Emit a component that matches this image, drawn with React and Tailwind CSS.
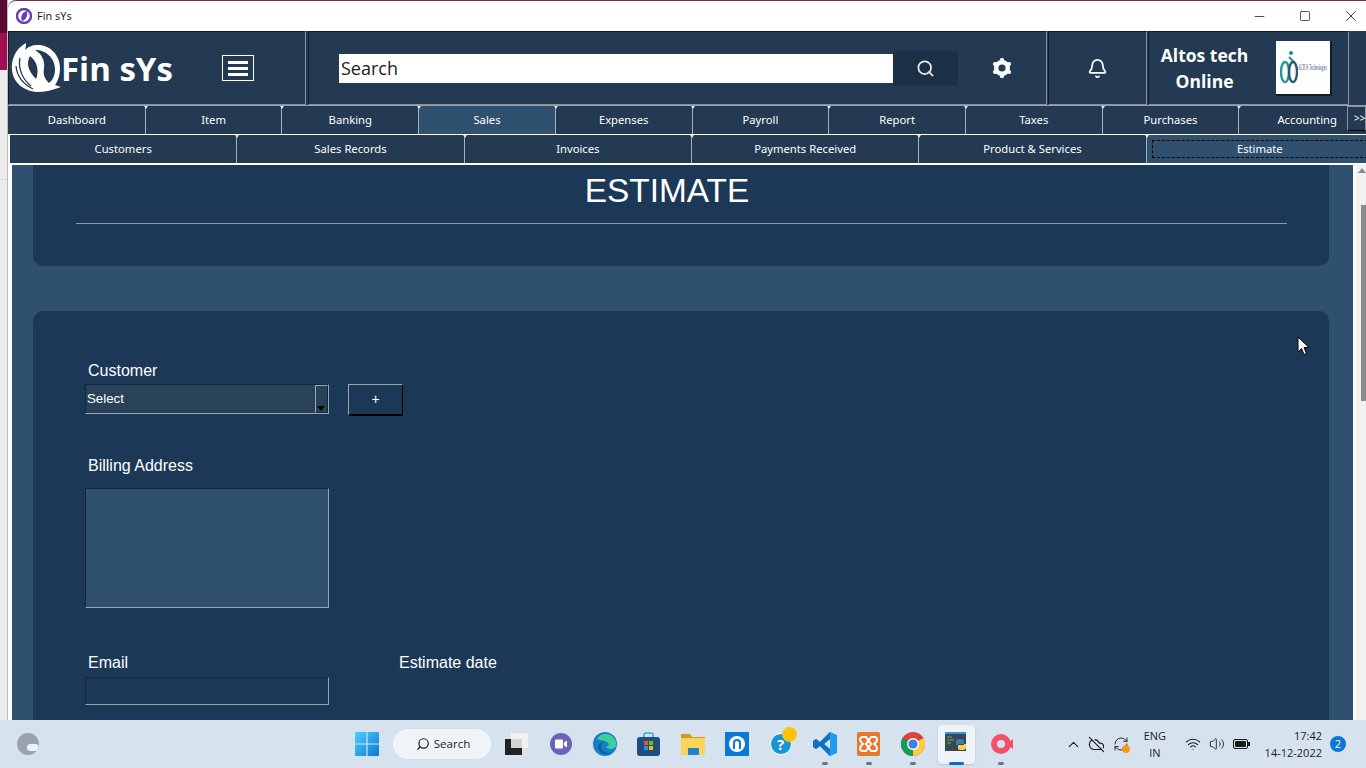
import { Bell, Search, Minus, Square, X, ChevronUp, Wifi, Volume2, CloudOff, RefreshCw } from "lucide-react";

const mainTabs = ["Dashboard", "Item", "Banking", "Sales", "Expenses", "Payroll", "Report", "Taxes", "Purchases", "Accounting"];
const subTabs = ["Customers", "Sales Records", "Invoices", "Payments Received", "Product & Services", "Estimate"];

function AppLogo() {
  return (
    <svg width="50" height="52" viewBox="0 0 50 52" className="shrink-0">
      <path d="M15 1 C4 7 0 18 1 28 C2 40 12 49 26 50 C34 50 42 48 50 45 L44 43 C47 39 49 33 49 26 C49 13 39 3 27 3 C21 3 17 5 14 8 C15 5 15 3 15 1 Z" fill="#fff" />
      <path d="M24 8 C35 8 44 16 44 27 C44 33 42 38 38 41 C33 36 32 32 33 26 C34 19 31 12 24 8 Z" fill="#233a52" />
      <path d="M19 14 C15 21 17 29 25 37 C28 30 27 20 19 14 Z" fill="#233a52" />
      <path d="M9 16 C7 26 11 37 20 44 M5 24 C6 34 12 42 22 47" stroke="#233a52" strokeWidth="1.3" fill="none" />
    </svg>
  );
}

function CompanyLogo() {
  return (
    <div className="flex h-[55px] w-[56px] items-center border-r-2 border-b-2 border-[#111c28] bg-white pl-[4px]">
      <svg width="18" height="36" viewBox="0 0 18 36" className="shrink-0">
        <circle cx="11" cy="4" r="2" fill="#1f8f8f" />
        <path d="M9 8 L14 13" stroke="#1f8f8f" strokeWidth="2" />
        <ellipse cx="5" cy="23" rx="4" ry="10" fill="none" stroke="#1f9a96" strokeWidth="2.4" />
        <ellipse cx="13" cy="23" rx="4" ry="10" fill="none" stroke="#2b5a78" strokeWidth="2.4" />
      </svg>
      <div className="w-[30px] overflow-visible">
        <span className="block origin-left scale-x-[0.37] whitespace-nowrap font-['Liberation_Serif',serif] text-[9px] leading-none text-[#34506c]">ALTOS Technologies</span>
      </div>
    </div>
  );
}

function GearIcon() {
  return (
    <svg width="20" height="20" viewBox="0 0 20 20" className="ml-[34px]">
      <circle cx="10" cy="10" r="8" fill="#fff" />
      <circle cx="10" cy="1.8" r="2" fill="#fff" />
      <circle cx="10" cy="18.2" r="2" fill="#fff" />
      <circle cx="2.9" cy="5.9" r="2" fill="#fff" />
      <circle cx="17.1" cy="5.9" r="2" fill="#fff" />
      <circle cx="2.9" cy="14.1" r="2" fill="#fff" />
      <circle cx="17.1" cy="14.1" r="2" fill="#fff" />
      <circle cx="10" cy="10" r="3.6" fill="#233a52" />
    </svg>
  );
}

function WinLogo() {
  return (
    <svg width="24" height="24" viewBox="0 0 24 24">
      <defs>
        <linearGradient id="wl" x1="0" y1="0" x2="1" y2="1">
          <stop offset="0" stopColor="#4fd0fb" />
          <stop offset="1" stopColor="#0a78d4" />
        </linearGradient>
      </defs>
      <path d="M0 1 a1 1 0 0 1 1-1 h10.4 v11.4 H0 Z M12.6 0 H23 a1 1 0 0 1 1 1 v10.4 H12.6 Z M0 12.6 h11.4 V24 H1 a1 1 0 0 1-1-1 Z M12.6 12.6 H24 V23 a1 1 0 0 1-1 1 H12.6 Z" fill="url(#wl)" />
    </svg>
  );
}

function TaskIcon({ children, dot, active }) {
  return (
    <div className={`relative flex h-[39px] w-[37px] shrink-0 items-center justify-center rounded ${active ? "bg-[#eef3f9] shadow-sm" : ""}`}>
      {children}
      {dot && <span className="absolute -bottom-[1px] h-[3px] w-[6px] rounded-full bg-[#6c7680]" />}
      {active && <span className="absolute -bottom-[1px] h-[3px] w-[15px] rounded-full bg-[#0f6cc4]" />}
    </div>
  );
}

function Taskbar() {
  return (
    <div className="flex h-[48px] shrink-0 items-center bg-[#d6e2ee] font-['Open_Sans',sans-serif] text-[#1c1c1c]">
      <div className="relative ml-[17px] h-[22px] w-[22px] overflow-hidden rounded-full bg-[#98a2ad]">
        <span className="absolute bottom-[4px] right-0 h-[7px] w-[12px] rounded-full bg-[#eef1f4]" />
      </div>
      <div className="ml-[316px]"><WinLogo /></div>
      <div className="ml-[14px] flex h-[30px] w-[98px] items-center justify-center gap-1 rounded-full bg-[#eff4f9] pl-[2px] text-[11.5px]">
        <Search size={14} className="-scale-x-100" />
        Search
      </div>
      <div className="ml-[7px] flex items-center gap-[7px]">
        <TaskIcon>
          <div className="relative h-[22px] w-[23px]">
            <span className="absolute bottom-0 left-0 h-[16px] w-[17px] bg-[#222]" />
            <span className="absolute right-0 top-0 h-[15px] w-[17px] bg-[#f4f4f4]/85" />
          </div>
        </TaskIcon>
        <TaskIcon>
          <div className="flex h-[22px] w-[22px] items-center justify-center rounded-full bg-[#6a63b8]">
            <svg width="12" height="10" viewBox="0 0 12 10"><path d="M0 1.5 a1 1 0 0 1 1-1 h6 a1 1 0 0 1 1 1 v7 a1 1 0 0 1-1 1 h-6 a1 1 0 0 1-1-1 Z M9 3.5 L12 1.5 v7 L9 6.5 Z" fill="#fff" /></svg>
          </div>
        </TaskIcon>
        <TaskIcon>
          <svg width="24" height="24" viewBox="0 0 24 24">
            <circle cx="12" cy="12" r="12" fill="#1580c8" />
            <path d="M4 7 C8 0 20 0 23 10 C24 14 22 17 18 17 C15 17 13 16 13 14 C15 15 17 13 15 11 C11 7 6 9 4 7 Z" fill="#3ecf9a" />
            <path d="M8 14 C8 19 13 22 19 20 C15 24 6 23 5 15 C5 12 8 10 11 10 C9 11 8 12 8 14 Z" fill="#0f5f9e" />
          </svg>
        </TaskIcon>
        <TaskIcon>
          <svg width="23" height="24" viewBox="0 0 23 24">
            <path d="M7 6 V3 a2 2 0 0 1 2-2 h5 a2 2 0 0 1 2 2 v3" stroke="#35a7d8" strokeWidth="1.5" fill="none" />
            <rect x="0" y="5" width="23" height="19" rx="3" fill="#1d4e80" />
            <rect x="7" y="9" width="4" height="4" fill="#f25022" />
            <rect x="12" y="9" width="4" height="4" fill="#7fba00" />
            <rect x="7" y="14" width="4" height="4" fill="#00a4ef" />
            <rect x="12" y="14" width="4" height="4" fill="#ffb900" />
          </svg>
        </TaskIcon>
        <TaskIcon>
          <svg width="24" height="22" viewBox="0 0 24 22">
            <path d="M0 1 h9 l2 3 h13 v4 H0 Z" fill="#d29c16" />
            <rect x="0" y="5" width="24" height="17" fill="#fbd45c" />
            <rect x="7" y="15" width="11" height="7" rx="1" fill="#1a86c9" />
          </svg>
        </TaskIcon>
        <TaskIcon>
          <div className="flex h-[24px] w-[24px] items-center justify-center bg-[#0a78d4]">
            <div className="flex h-[16px] w-[16px] items-center justify-center rounded-full bg-white">
              <div className="h-[10px] w-[8px] rounded-t-full border-2 border-b-0 border-[#0a78d4]" />
            </div>
          </div>
        </TaskIcon>
        <TaskIcon>
          <div className="relative flex h-[22px] w-[22px] items-center justify-center rounded-full border border-white bg-[#1595d3] text-[15px] font-bold text-white">
            ?
            <span className="absolute -right-[6px] -top-[7px] h-[15px] w-[15px] rounded-full bg-[#fdc20c]" />
          </div>
        </TaskIcon>
        <TaskIcon dot>
          <svg width="24" height="24" viewBox="0 0 24 24">
            <path d="M17 0 L24 3 V21 L17 24 L7 14 L3 17 L0 15 V9 L3 7 L7 10 Z M17 7 L11 12 L17 17 Z" fill="#1f9cf0" fillRule="evenodd" />
            <path d="M17 0 L7 10 L3 7 L0 9 V15 L3 17 L7 14 L17 24 V17 L11 12 L17 7 Z" fill="#0f74bd" />
          </svg>
        </TaskIcon>
        <TaskIcon dot>
          <svg width="23" height="24" viewBox="0 0 23 24">
            <rect width="23" height="24" rx="2" fill="#e8782c" />
            <path d="M4 5 H9 L14 12 L9 19 H4 M19 5 H14 L9 12 L14 19 H19 M4 5 C2 8 3 10 6 12 C3 14 2 16 4 19 M19 5 C21 8 20 10 17 12 C20 14 21 16 19 19" stroke="#fff" strokeWidth="2" fill="none" />
          </svg>
        </TaskIcon>
        <TaskIcon dot>
          <svg width="24" height="24" viewBox="0 0 24 24">
            <circle cx="12" cy="12" r="12" fill="#db4437" />
            <path d="M12 12 L1.6 6 A12 12 0 0 0 12 24 Z" fill="#0f9d58" />
            <path d="M12 12 L22.4 6 A12 12 0 0 1 12 24 Z" fill="#ffcd40" />
            <circle cx="12" cy="12" r="6" fill="#fff" />
            <circle cx="12" cy="12" r="4.6" fill="#3f7fea" />
          </svg>
        </TaskIcon>
        <TaskIcon active>
          <svg width="24" height="24" viewBox="0 0 24 24">
            <rect x="0" y="1" width="21" height="18" fill="#3a4650" />
            <rect x="0" y="0" width="21" height="2" fill="#2b9bd6" />
            <path d="M2 5 h5 M2 8 h7 M2 11 h4" stroke="#5bb36a" strokeWidth="1" />
            <path d="M11 10 a3 3 0 0 1 3-3 h3 a2 2 0 0 1 2 2 v3 h-6 v1 h-2 Z" fill="#3a7ab0" />
            <path d="M21 15 a3 3 0 0 1-3 3 h-3 a2 2 0 0 1-2-2 v-3 h6 v-1 h2 Z" fill="#f7d24b" />
          </svg>
        </TaskIcon>
        <TaskIcon dot>
          <div className="relative h-[20px] w-[20px] rounded-full bg-[#f3506a]">
            <span className="absolute left-[6px] top-[6px] h-[8px] w-[8px] rounded-full bg-[#d6e2ee]" />
            <span className="absolute -right-[2px] top-[5px] h-0 w-0 border-y-[5px] border-r-[6px] border-y-transparent border-r-[#f3506a]" />
          </div>
        </TaskIcon>
      </div>
      <div className="ml-auto flex items-center">
        <ChevronUp size={17} strokeWidth={1.5} />
        <CloudOff size={17} strokeWidth={1.6} className="ml-[6px]" />
        <div className="relative ml-[8px]">
          <RefreshCw size={16} strokeWidth={1.4} />
          <span className="absolute -bottom-[1px] -right-[1px] h-[8px] w-[8px] rounded-full bg-[#f79a14]" />
        </div>
        <div className="ml-[15px] flex flex-col items-center text-[11px] leading-[17px]">
          <span>ENG</span>
          <span>IN</span>
        </div>
        <Wifi size={16} strokeWidth={1.6} className="ml-[19px]" />
        <Volume2 size={16} strokeWidth={1.3} className="ml-[8px]" />
        <div className="ml-[8px] flex items-center">
          <span className="flex h-[10px] w-[15px] items-center rounded-[2px] border border-[#1c1c1c] p-px">
            <span className="h-full w-full rounded-[1px] bg-[#1c1c1c]" />
          </span>
          <span className="h-[4px] w-[1.5px] bg-[#1c1c1c]" />
        </div>
        <div className="ml-[15px] flex flex-col items-end text-[11px] leading-[17px]">
          <span>17:42</span>
          <span>14-12-2022</span>
        </div>
        <div className="ml-[8px] mr-[20px] flex h-[16px] w-[16px] items-center justify-center rounded-full bg-[#0a78d4] text-[11px] text-white">2</div>
      </div>
    </div>
  );
}

function Header() {
  return (
    <div className="flex h-[74px] shrink-0 bg-[#233a52] text-white">
      <div className="flex w-[298px] items-center border border-[#111c28] border-r-[#8b939b] border-b-[#8b939b] pl-[2px]">
        <AppLogo />
        <span className="w-[110px] whitespace-nowrap font-['Open_Sans',sans-serif] text-[33px] font-bold leading-none">Fin sYs</span>
        <button className="ml-[51px] flex h-[26px] w-[32px] flex-col items-center justify-center gap-[3px] border border-white">
          <span className="h-[3px] w-[20px] bg-white" />
          <span className="h-[3px] w-[20px] bg-white" />
          <span className="h-[3px] w-[20px] bg-white" />
        </button>
      </div>
      <div className="ml-[2px] flex w-[739px] items-center border border-[#111c28] border-r-[#8b939b] border-b-[#8b939b] pl-[30px]">
        <div className="flex h-[29px] w-[554px] items-center bg-white pl-[2px] font-['Open_Sans',sans-serif] text-[18px] text-[#222]">Search</div>
        <div className="flex h-[35px] w-[65px] items-center justify-center bg-[#1c3045]">
          <Search size={19} strokeWidth={2.2} className="text-[#e8e8e8]" />
        </div>
        <GearIcon />
      </div>
      <div className="ml-[1px] flex w-[99px] items-center justify-center border border-[#111c28] border-r-[#8b939b] border-b-[#8b939b]">
        <Bell size={21} strokeWidth={2} />
      </div>
      <div className="ml-[1px] flex w-[201px] items-center border border-[#111c28] border-r-[#8b939b] border-b-[#8b939b] pl-[11px]">
        <div className="w-[89px] whitespace-nowrap text-center font-['Open_Sans',sans-serif] text-[17.5px] font-bold leading-[26px]">
          <div>Altos tech</div>
          <div>Online</div>
        </div>
        <div className="ml-[27px]"><CompanyLogo /></div>
      </div>
      <div className="flex-1" />
    </div>
  );
}

function TabCell({ label, active, focused, first }) {
  return (
    <div className={`relative flex h-full flex-1 items-center justify-center ${active ? "bg-[#305070]" : "bg-[#233a52]"} ${first ? "" : "border-l border-[#a9b2ba]"}`}>
      {!first && <span className="absolute -left-[2px] top-0 h-0 w-0 border-x-[2px] border-t-[3px] border-x-transparent border-t-[#dfe3e6]" />}
      {focused && <span className="absolute inset-x-[5px] inset-y-[5px] border border-dashed border-black" />}
      <span className="relative">{label}</span>
    </div>
  );
}

function TabBars() {
  return (
    <div className="shrink-0 overflow-hidden font-['Noto_Sans',sans-serif] text-[11.25px] text-white">
      <div className="relative h-[29px] border-t border-[#9aa1a8] bg-[#233a52]">
        <div className="flex h-full w-[1367px] pl-[1px]">
          {mainTabs.map((t, i) => (
            <TabCell key={t} label={t} active={t === "Sales"} first={i === 0} />
          ))}
        </div>
        <div className="absolute left-[1339px] right-0 top-0 flex h-[25px] items-center whitespace-nowrap border border-[#8b939b] border-b-black bg-[#233a52] pl-[6px] text-[10px]">&gt;&gt;</div>
      </div>
      <div className="h-[31px] border-t border-white bg-white">
        <div className="flex h-[28px] w-[1365px] pl-[2px]">
          {subTabs.map((t, i) => (
            <TabCell key={t} label={t} focused={t === "Estimate"} active={t === "Estimate"} first={i === 0} />
          ))}
        </div>
      </div>
    </div>
  );
}

function FieldLabel({ children, className = "" }) {
  return <div className={`pl-[3px] text-[16px] leading-[18px] text-white ${className}`}>{children}</div>;
}

function Scrollbar() {
  return (
    <div className="flex w-[13px] shrink-0 flex-col items-end border-l-[3px] border-white bg-[#f1f1f1]">
      <span className="mt-[3px] h-0 w-0 border-x-[4px] border-b-[5px] border-x-transparent border-b-[#8a8a8a]" />
      <span className="mt-[32px] h-[196px] w-[5px] bg-[#8a8a8a]" />
    </div>
  );
}

function EstimateForm() {
  return (
    <div className="relative flex min-h-0 flex-1 bg-white pl-[4px]">
      <div className="min-w-0 flex-1 overflow-hidden bg-[#305070] pl-[21px] pr-[24px] font-['Liberation_Sans',sans-serif]">
        <div className="h-[101px] rounded-b-[10px] bg-[#1c3857] pl-[43px] pr-[42px] pt-[7px] text-white">
          <h1 className="mr-[29px] text-center text-[33.4px] leading-[38px]">ESTIMATE</h1>
          <div className="mt-[13px] h-px bg-[#8a99a8]" />
        </div>
        <div className="mt-[45px] h-[500px] rounded-t-[10px] bg-[#1c3857] pl-[52px] pt-[51px]">
          <FieldLabel>Customer</FieldLabel>
          <div className="mt-[4px] flex items-start">
            <div className="flex h-[30px] w-[244px] items-stretch justify-between border border-[#14263a] border-b-[#9aa5b0] border-r-[#9aa5b0] bg-[#28425a] text-[13.3px] text-white">
              <span className="self-center pl-[1px]">Select</span>
              <span className="relative w-[13px] border border-[#9aa5b0] border-b-[#14263a] border-r-[#14263a] bg-[#28425a]">
                <span className="absolute bottom-[1px] left-[1px] h-0 w-0 border-x-[4px] border-t-[5px] border-x-transparent border-t-black" />
              </span>
            </div>
            <button className="ml-[19px] flex h-[32px] w-[55px] items-center justify-center border border-[#9aa5b0] border-b-2 border-b-black border-r-black bg-[#1c3857] text-[14px] text-white">+</button>
          </div>
          <FieldLabel className="mt-[41px]">Billing Address</FieldLabel>
          <div className="mt-[13px] h-[120px] w-[244px] border border-[#14263a] border-b-[#9aa5b0] border-r-[#9aa5b0] bg-[#2f4f6f]" />
          <div className="mt-[46px] flex">
            <div className="w-[311px]"><FieldLabel>Email</FieldLabel></div>
            <div><FieldLabel>Estimate date</FieldLabel></div>
          </div>
          <div className="mt-[5px] h-[28px] w-[244px] border border-[#9aa5b0] border-l-[#14263a] border-t-[#14263a] bg-[#1c3857]" />
        </div>
      </div>
      <Scrollbar />
      <svg width="13" height="20" viewBox="0 0 13 20" className="absolute left-[1289px] top-[171px]">
        <path d="M1 1 V16 L4.5 12.5 L7 18.5 L9.5 17.5 L7 11.5 H12 Z" fill="#fff" stroke="#000" strokeWidth="1" />
      </svg>
    </div>
  );
}

export default function App() {
  return (
    <div className="flex h-screen w-full flex-col overflow-hidden bg-white">
      <div className="flex min-h-0 flex-1">
        <div className="flex w-[8px] shrink-0 flex-col border-r border-[#bdbdbd] bg-[#ececec]">
          <div className="h-[33px] bg-[#5a0a32]" />
          <div className="h-[37px] bg-[#a01050]" />
          <div className="mt-[109px] h-px bg-[#d8d8d8]" />
        </div>
        <div className="flex min-w-0 flex-1 flex-col">
          <div className="flex h-[31px] shrink-0 items-center justify-between overflow-hidden rounded-tl-lg border-t border-[#7a2a50] bg-white pl-[8px] font-['Open_Sans',sans-serif] text-[11px] text-[#111]">
            <div className="flex items-center gap-[5px]">
              <svg width="16" height="16" viewBox="0 0 16 16">
                <circle cx="8" cy="8" r="7" fill="none" stroke="#6a3fb5" strokeWidth="2.4" />
                <path d="M11 3 C6 4 4 9 6 13 C10 12 12 8 11 3 Z" fill="#6a3fb5" />
              </svg>
              Fin sYs
            </div>
            <div className="flex items-center">
              <div className="flex h-[30px] w-[46px] items-center justify-center"><Minus size={15} strokeWidth={1.2} /></div>
              <div className="flex h-[30px] w-[46px] items-center justify-center"><Square size={12} strokeWidth={1.4} /></div>
              <div className="ml-[8px] flex h-[30px] w-[30px] items-center justify-center"><X size={18} strokeWidth={1.1} /></div>
            </div>
          </div>
          <Header />
          <TabBars />
          <EstimateForm />
        </div>
      </div>
      <Taskbar />
    </div>
  );
}
